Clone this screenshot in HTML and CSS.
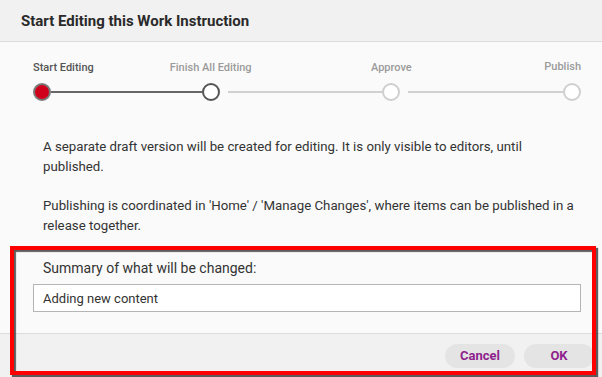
FILE: index.html
```html
<!DOCTYPE html>
<html>
<head>
    <meta charset="UTF-8">
    <title>Start Editing this Work Instruction</title>
    <link rel="stylesheet" href="styles.css">
</head>
<body>
    <div class="dialog">
        <div class="dialog-header">
            <h2 class="dialog-title">Start Editing this Work Instruction</h2>
        </div>

        <div class="dialog-body">
            <div class="stepper">
                <span class="step-label step-first active">Start Editing</span>
                <span class="step-label step-2">Finish All Editing</span>
                <span class="step-label step-3">Approve</span>
                <span class="step-label step-last">Publish</span>

                <span class="step-dot current"></span>
                <span class="step-line done"></span>
                <span class="step-dot next"></span>
                <span class="step-line gap"></span>
                <span class="step-dot"></span>
                <span class="step-line gap"></span>
                <span class="step-dot"></span>
            </div>

            <p class="info">A separate draft version will be created for editing. It is only visible to editors, until published.</p>
            <p class="info">Publishing is coordinated in 'Home' / 'Manage Changes', where items can be published in a release together.</p>

            <label class="summary-label" for="summary">Summary of what will be changed:</label>
            <input id="summary" class="summary-input" type="text" value="Adding new content">
        </div>

        <div class="dialog-footer">
            <button class="btn">Cancel</button>
            <button class="btn">OK</button>
        </div>
    </div>

    <!-- annotation box drawn over the screenshot -->
    <div class="highlight"></div>
</body>
</html>
```

FILE: styles.css
```css
body {
    margin: 0;
    font-family: Roboto, 'Liberation Sans', sans-serif;
    background: #fafafa;
    color: #333;
    width: 602px;
    height: 377px;
    overflow: hidden;
    position: relative;
}
.dialog {
    display: flex;
    flex-direction: column;
    height: 377px;
}
.dialog-header {
    background: #f1f1f1;
    border-bottom: 1px solid #dcdcdc;
    height: 41px;
    padding-left: 21px;
    display: flex;
    align-items: center;
}
.dialog-title {
    margin: 0;
    font-size: 15px;
    font-weight: 700;
    color: #2a2a2a;
}
.dialog-body {
    flex: 1;
    padding: 0 21px 0 33px;
}
.stepper {
    display: grid;
    grid-template-columns: 18px 151fr 18px 163fr 18px 163fr 18px;
    grid-template-rows: 14px 18px;
    row-gap: 9px;
    margin-top: 18px;
    align-items: center;
}
.step-label {
    grid-row: 1;
    font-size: 11px;
    font-weight: 500;
    color: #9a9a9a;
    white-space: nowrap;
}
.step-label.active {
    color: #555;
}
.step-first { grid-column: 1; justify-self: start; }
.step-2 { grid-column: 3; justify-self: center; }
.step-3 { grid-column: 5; justify-self: center; }
.step-last { grid-column: 7; justify-self: end; margin-top: -2px; }
.step-dot {
    grid-row: 2;
    width: 18px;
    height: 18px;
    box-sizing: border-box;
    border: 2.5px solid #cfcfcf;
    border-radius: 50%;
    background: #fff;
}
.step-dot.current {
    border-color: #7a7a7a;
    background: #d0021b;
}
.step-dot.next {
    border-color: #555;
}
.step-line {
    grid-row: 2;
    height: 2px;
    background: #d0d0d0;
}
.step-line.done {
    background: #666;
}
.step-line.gap {
    margin-left: 8px;
}
.info {
    max-width: 533px;
    margin: 0 0 19px 10px;
    font-size: 13.25px;
    line-height: 20px;
}
.stepper + .info {
    margin-top: 36px;
}
.summary-label {
    display: block;
    margin: 24px 0 8px 10px;
    font-size: 14px;
    line-height: 16px;
}
.summary-input {
    display: block;
    width: 100%;
    height: 28px;
    box-sizing: border-box;
    border: 1px solid #b5b5b5;
    background: #fff;
    padding: 0 9px;
    font-family: Roboto, 'Liberation Sans', sans-serif;
    font-size: 13px;
    color: #333;
}
.dialog-footer {
    background: #f1f1f1;
    border-top: 1px solid #dcdcdc;
    height: 43px;
    display: flex;
    justify-content: flex-end;
    align-items: center;
    gap: 9px;
    padding: 0 8px 0 0;
}
.btn {
    background: #e4e4e4;
    border: none;
    border-radius: 12px;
    width: 70px;
    height: 24px;
    font-family: Roboto, 'Liberation Sans', sans-serif;
    font-size: 13px;
    font-weight: 700;
    color: #8e1f8c;
    cursor: pointer;
}
.highlight {
    position: absolute;
    left: 10px;
    top: 246px;
    width: 586px;
    height: 129px;
    box-sizing: border-box;
    border: 4px solid #ff0000;
    box-shadow: 2px 2px 1px rgba(40, 40, 40, 0.75), inset 2px 2px 1px rgba(40, 40, 40, 0.75);
}
```
